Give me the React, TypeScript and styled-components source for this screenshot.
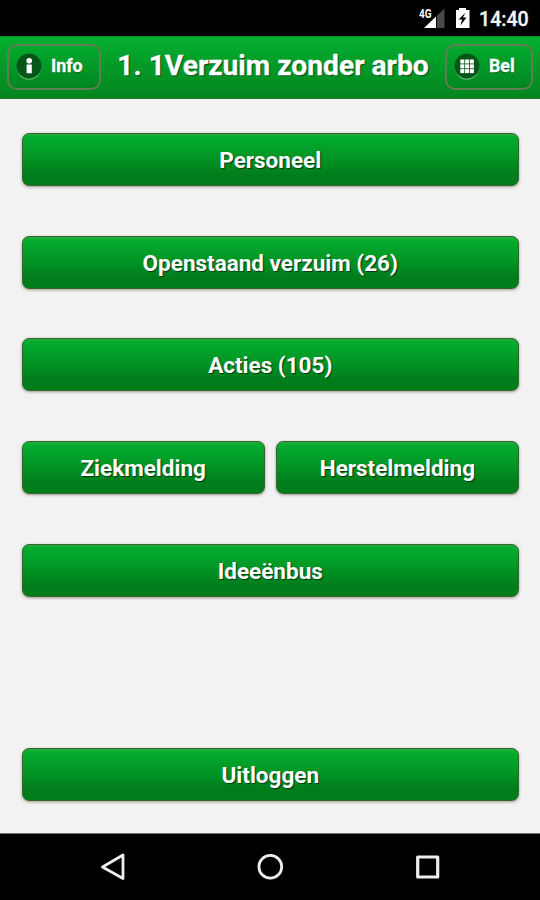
import React from "react";
import styled, { createGlobalStyle } from "styled-components";

const GlobalStyle = createGlobalStyle`
  * { box-sizing: border-box; }
  body { margin: 0; background: #f2f2f2; font-family: Roboto, "Liberation Sans", sans-serif; }
`;

const Screen = styled.div`
  width: 540px;
  height: 900px;
  display: flex;
  flex-direction: column;
  background: #f2f2f2;
  overflow: hidden;
`;

const StatusBar = styled.div`
  height: 36px;
  flex: none;
  display: flex;
  justify-content: flex-end;
  background: #000;
  color: #f4f4f4;
`;

const StatusIcons = styled.svg`
  width: 60px;
  height: 36px;
  flex: none;
  fill: #fff;
`;

const Clock = styled.span`
  width: 61px;
  padding: 1px 0 0 0;
  font-size: 19.6px;
  font-weight: 500;
  line-height: 37px;
  white-space: nowrap;
  -webkit-text-stroke: 0.3px #f4f4f4;
`;

const Header = styled.header`
  height: 63px;
  flex: none;
  display: flex;
  align-items: flex-start;
  justify-content: space-between;
  padding: 7px 7px 0 7px;
  background: linear-gradient(#04ae30, #02851e);
  border-top: 1px solid #078a25;
  border-bottom: 1px solid #247b31;
  color: #fff;
`;

const Title = styled.h1`
  margin: 0;
  padding-top: 2px;
  width: 312px;
  font-size: 28.2px;
  font-weight: 700;
  line-height: 39px;
  white-space: nowrap;
  text-align: center;
  text-shadow: 1px 1px 1px #064013;
  -webkit-text-stroke: 0.3px #fff;
`;

const HeaderButton = styled.button<{ $width: number }>`
  width: ${(p) => p.$width}px;
  height: 46px;
  flex: none;
  display: flex;
  align-items: center;
  gap: 9px;
  padding: 0 0 1px 7px;
  border: 2px solid #5f7f50;
  border-radius: 10px;
  background: linear-gradient(#03a92d, #018620);
  color: #fff;
  font: 700 17.8px/22px Roboto, "Liberation Sans", sans-serif;
  text-shadow: 0 1px 1px #075018;
  -webkit-text-stroke: 0.3px #fff;
`;

const HeaderLabel = styled.span`
  padding-bottom: 1px;
`;

const RoundIcon = styled.svg`
  width: 26px;
  height: 27px;
  flex: none;
`;

const Menu = styled.main`
  flex: 1;
  display: flex;
  flex-direction: column;
  gap: 49.7px;
  padding: 33.9px 21px 0 21.5px;
`;

const ButtonRow = styled.div<{ $spaced?: boolean }>`
  height: 53px;
  flex: none;
  display: flex;
  gap: 11px;
  margin-top: ${(p) => (p.$spaced ? "101.2px" : "0")};
`;

const MenuButton = styled.button`
  flex: 1;
  min-width: 0;
  padding: 1px 0 0 0;
  border: 1px solid #35662b;
  border-radius: 7px;
  background: linear-gradient(#29a943 0, #03ad2e 3px, #018f22 55%, #007c1b 80%, #007e1c 100%);
  box-shadow: 0 1px 3px rgba(65, 35, 25, 0.45);
  color: #fff;
  font: 700 22.5px/51px Roboto, "Liberation Sans", sans-serif;
  text-shadow: 1px 1px 1px #06380f;
`;

const NavigationBar = styled.nav`
  height: 67px;
  flex: none;
  display: flex;
  align-items: center;
  justify-content: space-between;
  padding: 0 97px 0 97px;
  background: #000;
  border-top: 1px solid #777;
`;

const NavIcon = styled.svg`
  width: 32px;
  height: 32px;
  fill: none;
  stroke: #eee;
  stroke-width: 2.8;
  stroke-linejoin: round;
`;

const SquareIcon = styled(NavIcon)`
  stroke-width: 3.2;
`;

const NetworkLabel = styled.text`
  font: 700 13px Roboto, "Liberation Sans", sans-serif;
`;

const rows = [
  ["Personeel"],
  ["Openstaand verzuim (26)"],
  ["Acties (105)"],
  ["Ziekmelding", "Herstelmelding"],
  ["Ideeënbus"],
  ["Uitloggen"],
];

const gridSteps = [0, 1, 2];

export default function App() {
  return (
    <>
      <GlobalStyle />
      <Screen>
        <StatusBar>
          <StatusIcons viewBox="419 0 60 36">
            <path d="M424 28 436 16.5V28Z" />
            <path d="M437 15.5 444.5 8.5V28H437Z" fill="#494949" />
            <NetworkLabel x="419" y="17.5" textLength="12.5" lengthAdjust="spacingAndGlyphs">4G</NetworkLabel>
            <path d="M456 10H459V8H466V10H469.5V28H456Z" />
            <path d="M465.5 12.5 458.5 19.5H462L460.5 25.5 466.5 17.5H463Z" fill="#080808" />
          </StatusIcons>
          <Clock>14:40</Clock>
        </StatusBar>
        <Header>
          <HeaderButton $width={94}>
            <RoundIcon viewBox="0 0 26 27">
              <circle cx="13" cy="14.5" r="12.3" fill="#55b965" />
              <circle cx="13" cy="13" r="12.5" fill="#055718" />
              <circle cx="13.2" cy="7.8" r="2.8" fill="#fff" />
              <path d="M10.6 11.5h5.2v8.8h-5.2z" fill="#fff" />
            </RoundIcon>
            <HeaderLabel>Info</HeaderLabel>
          </HeaderButton>
          <Title>1. 1Verzuim zonder arbo</Title>
          <HeaderButton $width={88}>
            <RoundIcon viewBox="0 0 26 27">
              <circle cx="13" cy="14.5" r="12.3" fill="#55b965" />
              <circle cx="13" cy="13" r="12.5" fill="#055718" />
              {gridSteps.map((y) =>
                gridSteps.map((x) => (
                  <rect key={`${x}-${y}`} x={6.3 + x * 4.8} y={6.5 + y * 4.8} width="4" height="4" fill="#fff" />
                )),
              )}
            </RoundIcon>
            <HeaderLabel>Bel</HeaderLabel>
          </HeaderButton>
        </Header>
        <Menu>
          {rows.map((labels, index) => (
            <ButtonRow key={labels[0]} $spaced={index === rows.length - 1}>
              {labels.map((label) => (
                <MenuButton key={label}>{label}</MenuButton>
              ))}
            </ButtonRow>
          ))}
        </Menu>
        <NavigationBar>
          <NavIcon viewBox="97 851 32 32">
            <path d="M102.5 867 123 855V878.5Z" />
          </NavIcon>
          <NavIcon viewBox="254 851 32 32">
            <circle cx="270.3" cy="866.8" r="11.4" />
          </NavIcon>
          <SquareIcon viewBox="411 851 32 32">
            <rect x="417.7" y="857" width="20" height="20" />
          </SquareIcon>
        </NavigationBar>
      </Screen>
    </>
  );
}
